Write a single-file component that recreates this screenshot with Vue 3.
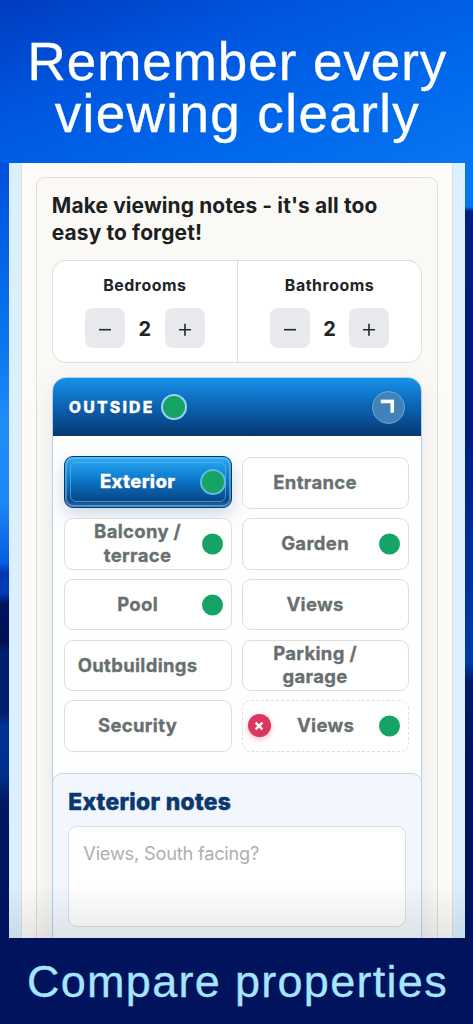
<script setup>
const rooms = ['Bedrooms', 'Bathrooms']
const areas = [
  { label: 'Exterior', active: true, dot: true },
  { label: 'Entrance' },
  { label: 'Balcony /\nterrace', dot: true },
  { label: 'Garden', dot: true },
  { label: 'Pool', dot: true },
  { label: 'Views' },
  { label: 'Outbuildings' },
  { label: 'Parking /\ngarage' },
  { label: 'Security' },
  { label: 'Views', custom: true, dot: true }
]
</script>

<template>
  <div class="poster">
    <h1><span>Remember every</span><span class="second">viewing clearly</span></h1>
    <div class="screen">
      <div class="sheet">
        <div class="card">
          <h2>Make viewing notes - it's all too<br>easy to forget!</h2>
          <div class="counts">
            <div v-for="r in rooms" :key="r" class="count">
              <div class="count-label">{{ r }}</div>
              <div class="stepper">
                <button><svg viewBox="0 0 14 14"><path d="M1 8.7H13" /></svg></button>
                <span>2</span>
                <button><svg viewBox="0 0 14 14"><path d="M1 8.7H13M7 2.7V14.7" /></svg></button>
              </div>
            </div>
          </div>
          <section class="group">
            <header>
              <span class="title">OUTSIDE</span>
              <i class="dot ring"></i>
              <span class="toggle"><svg viewBox="0 0 14 14"><path d="M0 .3H13.6V13.5H10V4H0Z" /></svg></span>
            </header>
            <div class="areas">
              <div v-for="(a, i) in areas" :key="i" class="area" :class="{ active: a.active, custom: a.custom }">
                <span v-if="a.custom" class="remove"><svg viewBox="0 0 10 10"><path d="M1.6 1.6L8.4 8.4M8.4 1.6L1.6 8.4" /></svg></span>
                <span class="label">{{ a.label }}</span>
                <i v-if="a.dot" class="dot" :class="{ ring: a.active }"></i>
              </div>
            </div>
            <div class="notes">
              <h3>Exterior notes</h3>
              <textarea placeholder="Views, South facing?"></textarea>
            </div>
          </section>
        </div>
      </div>
      <div class="fade"></div>
    </div>
    <footer>Compare properties</footer>
  </div>
</template>

<style>
body { margin: 0; overflow: hidden; }
</style>

<style scoped>
* { box-sizing: border-box; }
.poster {
  width: 473px; height: 1024px; overflow: hidden;
  padding: 0 8.4px 0 9.3px;
  display: flex; flex-direction: column;
  font-family: Inter, "Liberation Sans", sans-serif;
  background:
    linear-gradient(#00135c, #00135c) 0 938px / 100% 86px no-repeat,
    linear-gradient(#0050b800 0, #001f80 4px, #001b7c 220px, #002c96 330px, #0038a5 425px, #003aa5 455px, #001868 475px, #001260 570px, #00135c 730px) 100% 207px / 10px 732px no-repeat,
    linear-gradient(#0050dc 0, #0877ee 180px, #208cfa 260px, #1c86f6 340px, #075ce0 400px, #0036ae 410px, #003dbb 430px, #00135f 440px, #001052 480px, #001f70 488px, #001f70 552px, #003291 562px, #00308c 610px, #001862 640px, #00135c 770px) 0 163px / 10px 775px no-repeat,
    linear-gradient(160deg, #003cbf 0, #0056df 110px, #0067eb 210px, #0875f0 310px);
}
h1 {
  margin: 0; height: 163px; padding: 36px 0 0 1px; color: #fff;
  display: flex; flex-direction: column; align-items: center;
  font: 400 53px/52px "Liberation Sans", Arial, sans-serif; letter-spacing: .95px;
  white-space: nowrap; -webkit-text-stroke: .35px #fff;
}
h1 .second { letter-spacing: 1.4px; }
.screen {
  position: relative; height: 775px; overflow: hidden;
  background: #dceffd; padding: 0 12px;
}
.sheet {
  height: 900px; background: #fcfbf9; padding: 14px 14px 0;
  border: solid #dcdedf; border-width: 0 1px;
}
.card {
  height: 950px; border: 1px solid #e1ddd8; border-radius: 9px;
  background: #fbf9f6; padding: 14px 14.5px 0;
}
h2 { margin: 0 0 13px; height: 55px; font-size: 20.9px; line-height: 27px; font-weight: 700; color: #1b2020; white-space: nowrap; letter-spacing: .14px; }
.counts { display: grid; grid-template-columns: 1fr 1fr; height: 103px; border: 1px solid #e1ddd7; border-radius: 14px; background: #fff; }
.count { display: flex; flex-direction: column; align-items: center; padding-top: 15px; }
.count + .count { border-left: 1px solid #e1ddd7; }
.count-label { font-size: 15.9px; line-height: 20px; font-weight: 700; color: #202426; letter-spacing: .55px; }
.stepper { display: flex; align-items: center; margin-top: 12px; }
.stepper button { width: 40px; height: 40px; padding: 0; border: 0; border-radius: 8px; background: #e8e9ec; display: grid; place-items: center; }
.stepper svg { width: 14px; height: 14px; overflow: visible; stroke: #242829; stroke-width: 1.6; fill: none; }
.stepper span { width: 39.5px; padding-top: 1px; text-align: center; font-size: 20px; line-height: 24px; font-weight: 700; color: #202426; }
.group {
  height: 800px; margin-top: 14px; border: 1.5px solid #add2ee; border-radius: 14px; overflow: hidden;
  background: #fefefe; box-shadow: 0 8px 24px rgba(70, 80, 90, .1);
}
header {
  height: 58px; padding: 0 16px; display: flex; align-items: center;
  background: linear-gradient(#1791ea, #0b64b6 48%, #07376f);
}
.title { color: #fff; font-size: 15.8px; font-weight: 800; letter-spacing: 2.2px; text-shadow: 0 1px 1px #0005; -webkit-text-stroke: .35px #fff; }
.dot { display: block; width: 21px; height: 21px; border-radius: 50%; background: #16a466; }
.dot.ring { width: 26px; height: 26px; border: 2px solid #9bd2f1; }
header .dot { margin-left: 6px; }
.toggle { margin-left: auto; width: 33px; height: 33px; border-radius: 50%; border: 1px solid #68a9dd; background: #4381b9; display: grid; place-items: center; }
.toggle svg { width: 14px; height: 14px; transform: translate(-1.5px, -.8px); fill: #fff; }
.areas { display: grid; grid-template-columns: 167.8px 167.8px; grid-auto-rows: 51.6px; column-gap: 9.7px; row-gap: 9.15px; padding: 21.4px 11.4px 21.1px; }
.area {
  position: relative; display: flex; align-items: center; justify-content: center;
  padding-right: 21px; border: 1.4px solid #e1ddd7; border-radius: 9px; background: #fff;
  font-size: 18.5px; line-height: 23.5px; font-weight: 700; color: #68706f; text-align: center; letter-spacing: .32px;
  -webkit-text-stroke: .3px currentColor;
}
.label { white-space: pre; }
.area .dot { position: absolute; right: 8px; top: 50%; transform: translateY(-50%); }
.area.active {
  border: 1.5px solid #07376f; color: #fff; font-weight: 800; margin: -1px 0 1px;
  background: linear-gradient(#2fabf4, #0b7bce 42%, #07498a 85%, #2a649f);
  box-shadow: inset 0 0 0 2px #78bfea88, 0 7px 18px #20509038; text-shadow: 0 1px 1px #0004;
}
.area.active::before { content: ""; position: absolute; inset: 5px; border: 1px solid #72c2f58a; border-radius: 6px; }
.area.active .dot { right: 5px; background: #16a466; border-color: #62b8dc; }
.area.custom { border-style: dashed; padding-right: 0; }
.remove { position: absolute; left: 5px; top: 13px; width: 23px; height: 23px; border-radius: 50%; background: #dc365e; display: grid; place-items: center; box-shadow: 0 2px 6px #dc365e55; }
.remove svg { width: 10px; height: 10px; fill: none; stroke: #fff; stroke-width: 2.4; }
.notes { height: 300px; margin: 0 -1px; padding: 13px 15.5px; border: 1px solid #c6d8e8; border-radius: 10px; background: #f2f7fd; }
h3 { margin: 0; font-size: 22.8px; line-height: 30px; font-weight: 800; color: #0b396f; letter-spacing: .3px; -webkit-text-stroke: .5px #0b396f; }
textarea { display: block; width: 338px; height: 101px; margin-top: 9px; padding: 12px 14px; border: 1.4px solid #d9dfe1; border-radius: 9px; background: #fff; resize: none; outline: 0; font: 400 18.2px/28px Inter, sans-serif; letter-spacing: -.2px; }
textarea::placeholder { color: #adafb0; opacity: 1; }
.fade { position: absolute; inset: auto 0 0; height: 55px; background: linear-gradient(transparent, #30383f1c); pointer-events: none; }
footer { height: 86px; text-align: center; color: #a6e5ff; font: 400 45px/88px "Liberation Sans", Arial, sans-serif; letter-spacing: 1.3px; white-space: nowrap; padding-left: 1px; -webkit-text-stroke: .3px #a6e5ff; }
</style>
